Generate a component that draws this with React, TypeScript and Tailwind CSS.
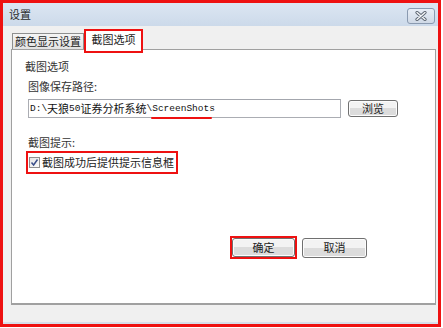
import React from "react";

const cjk = '"Noto Sans CJK SC", "Liberation Sans", sans-serif';
const mono = '"Liberation Mono", monospace';

// the path text mixes narrow mono ascii with wider CJK
const pathParts: { t: string; m?: boolean }[] = [
  { t: "D:\\", m: true },
  { t: "天狼" },
  { t: "50", m: true },
  { t: "证券分析系统" },
  { t: "\\ScreenShots", m: true },
];

function WinButton({ label, className = "" }: { label: string; className?: string }) {
  return (
    <div
      className={`flex items-center justify-center rounded-[3px] border border-[#707070] bg-gradient-to-b from-[#f3f3f3] from-50% to-[#dcdcdc] to-50% text-[11px] leading-none text-[#222] shadow-[inset_0_0_0_1px_#fcfcfc] ${className}`}
    >
      {label}
    </div>
  );
}

export default function App() {
  return (
    <div className="h-[328px] w-[443px] bg-white" style={{ fontFamily: cjk }}>
      <div className="flex h-[327px] w-[441px] flex-col border-[3px] border-[#ee1111]">
        {/* title bar */}
        <div className="flex h-[23px] items-center justify-between bg-gradient-to-b from-[#dce6f2] to-[#ccdaea] pl-[6px] pr-[3px]">
          <span className="text-[11px] leading-none text-[#2a2a2a]">设置</span>
          <div className="mt-[2px] flex h-[16px] w-[28px] items-center justify-center rounded-[3px] border border-[#8a9ab0] bg-gradient-to-b from-[#e8eef6] to-[#cfd9e6]">
            <svg width="12" height="10" viewBox="0 0 12 10">
              <path d="M2 1.5 L10 8.5 M10 1.5 L2 8.5" stroke="#5b6470" strokeWidth="3.2" strokeLinecap="round" />
              <path d="M2 1.5 L10 8.5 M10 1.5 L2 8.5" stroke="#f4f6f8" strokeWidth="1.4" strokeLinecap="round" />
            </svg>
          </div>
        </div>

        <div className="flex flex-1 flex-col bg-[#f0f0f0]">
          {/* tabs */}
          <div className="relative z-10 -mb-[4px] flex h-[27px] items-end pl-[9px] pt-[3px]">
            <div className="mb-[4px] flex h-[16px] w-[72px] items-center justify-center border border-b-0 border-[#8e8f8f] bg-gradient-to-b from-[#f4f4f4] to-[#e2e2e2] text-[11px] leading-none text-[#222]">
              颜色显示设置
            </div>
            <div className="flex h-[24px] w-[59px] items-start justify-center border-2 border-[#ee1111] bg-white pt-[3px] text-[11px] leading-none text-[#222]">
              截图选项
            </div>
          </div>

          {/* panel */}
          <div className="ml-[8px] mr-[2px] flex h-[256px] flex-col border border-[#a0a0a0] border-b-2 bg-white pl-[16px]">
            <div className="-ml-[3px] mt-[9px] text-[11px] leading-[14px] text-[#333]">截图选项</div>
            <div className="mt-[6px] text-[11px] leading-[14px] text-[#333]">图像保存路径:</div>

            <div className="mt-[6px] flex items-center">
              <div className="relative flex h-[19px] w-[313px] items-center border border-[#abadb3] border-t-[#a3a6ad] pl-[1px] text-[#111]">
                {pathParts.map((p, i) => (
                  <span
                    key={i}
                    className={p.m ? "text-[9.5px] leading-none" : "text-[11px] leading-none"}
                    style={{ fontFamily: p.m ? mono : cjk }}
                  >
                    {p.t}
                  </span>
                ))}
                <div className="absolute left-[122px] top-[17px] h-[2px] w-[61px] rounded-full bg-[#ee1111]" />
              </div>
              <WinButton label="浏览" className="ml-[7px] h-[17px] w-[50px]" />
            </div>

            <div className="mt-[17px] text-[11px] leading-[14px] text-[#333]">截图提示:</div>

            <div className="-ml-[2px] mt-[2px] flex h-[23px] w-[152px] items-center border-2 border-[#ee1111] pl-[1px]">
              <div className="flex h-[11px] w-[11px] items-center justify-center border border-[#8f8f8f] bg-gradient-to-br from-[#e6e6e6] to-[#fafafa]">
                <svg width="9" height="9" viewBox="0 0 9 9">
                  <path d="M1.5 4.5 L3.6 7 L7.5 1.5" stroke="#3b4f8a" strokeWidth="1.5" fill="none" />
                </svg>
              </div>
              <span className="ml-[2px] text-[11px] leading-none text-[#222]">截图成功后提供提示信息框</span>
            </div>

            <div className="ml-[202px] mt-[62px] flex items-center">
              <div className="border-2 border-[#ee1111]">
                <WinButton label="确定" className="h-[19px] w-[63px]" />
              </div>
              <WinButton label="取消" className="ml-[5px] h-[20px] w-[65px]" />
            </div>
          </div>

          <div className="flex-1 border-b-[2px] border-[#d6dfea]" />
        </div>
      </div>
    </div>
  );
}
